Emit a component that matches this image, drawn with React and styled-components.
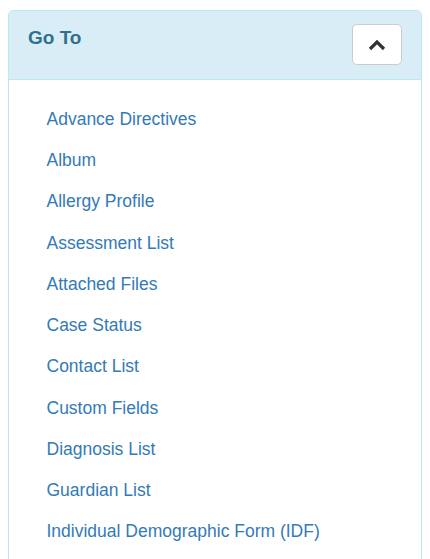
import React from "react";
import styled, { createGlobalStyle } from "styled-components";

const Global = createGlobalStyle`
  html, body { margin: 0; padding: 0; background: #fff; }
  body { font-family: "Liberation Sans", Arial, sans-serif; }
  * { box-sizing: border-box; }
`;

const Page = styled.div`
  padding: 10px 8px 0 8px;
  height: 559px;
  overflow: hidden;
`;

const Panel = styled.section`
  border: 1px solid #bce8f1;
  border-radius: 5px;
  background: #fff;
  min-height: 600px;
`;

const Heading = styled.header`
  display: flex;
  justify-content: space-between;
  align-items: flex-start;
  background: #d9edf7;
  border-bottom: 1px solid #bce8f1;
  border-radius: 4px 4px 0 0;
  padding: 13px 19px 14px 19px;
`;

const Title = styled.h3`
  margin: 3px 0 0 0;
  font-size: 19px;
  line-height: 21px;
  font-weight: 700;
  color: #31708f;
`;

const ToggleButton = styled.button`
  width: 50px;
  height: 41px;
  display: flex;
  align-items: center;
  justify-content: center;
  background: #fff;
  border: 1px solid #ccc;
  border-radius: 5px;
  padding: 0;
  cursor: pointer;
`;

const Body = styled.div`
  padding: 18.75px;
`;

const List = styled.ul`
  list-style: none;
  margin: 0;
  padding: 0 0 0 18.75px;
`;

const Item = styled.li`
  padding: 8.125px 0;
  line-height: 25px;
`;

const Link = styled.a`
  font-size: 17.5px;
  color: #337ab7;
  text-decoration: none;
`;

const items = [
  "Advance Directives",
  "Album",
  "Allergy Profile",
  "Assessment List",
  "Attached Files",
  "Case Status",
  "Contact List",
  "Custom Fields",
  "Diagnosis List",
  "Guardian List",
  "Individual Demographic Form (IDF)",
];

export default function App() {
  return (
    <>
      <Global />
      <Page>
        <Panel>
          <Heading>
            <Title>Go To</Title>
            <ToggleButton aria-label="Collapse">
              <svg width="18" height="12" viewBox="0 0 18 12" style={{ marginTop: 1 }}>
                <path d="M2 10 L9 3 L16 10" fill="none" stroke="#333" strokeWidth="3.2" strokeLinecap="butt" strokeLinejoin="miter" />
              </svg>
            </ToggleButton>
          </Heading>
          <Body>
            <List>
              {items.map((t) => (
                <Item key={t}>
                  <Link href="#">{t}</Link>
                </Item>
              ))}
            </List>
          </Body>
        </Panel>
      </Page>
    </>
  );
}
